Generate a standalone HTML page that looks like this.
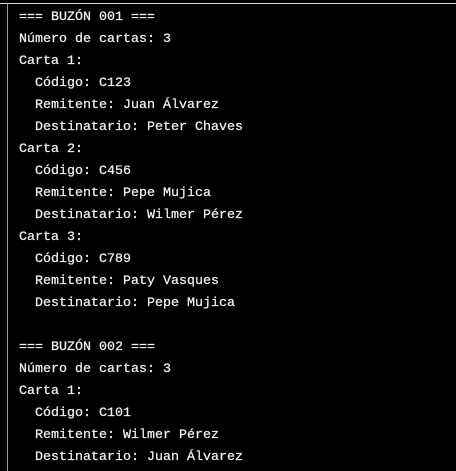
<!DOCTYPE html><html><head><style>
html,body{margin:0;padding:0;background:#000;width:456px;height:471px;overflow:hidden}
.top{position:absolute;left:0;top:3px;width:456px;height:1px;background:#d8d8d8}
.left{position:absolute;left:7px;top:3px;width:1px;height:468px;background:#9a9a9a}
pre{position:absolute;left:19px;top:7px;margin:0;font-family:"Liberation Mono",monospace;font-size:13.33px;line-height:22px;color:#f0f0f0;-webkit-text-stroke:0.25px #f0f0f0}
</style></head><body><div class="top"></div><div class="left"></div><pre>=== BUZÓN 001 ===
Número de cartas: 3
Carta 1:
  Código: C123
  Remitente: Juan Álvarez
  Destinatario: Peter Chaves
Carta 2:
  Código: C456
  Remitente: Pepe Mujica
  Destinatario: Wilmer Pérez
Carta 3:
  Código: C789
  Remitente: Paty Vasques
  Destinatario: Pepe Mujica

=== BUZÓN 002 ===
Número de cartas: 3
Carta 1:
  Código: C101
  Remitente: Wilmer Pérez
  Destinatario: Juan Álvarez</pre></body></html>
